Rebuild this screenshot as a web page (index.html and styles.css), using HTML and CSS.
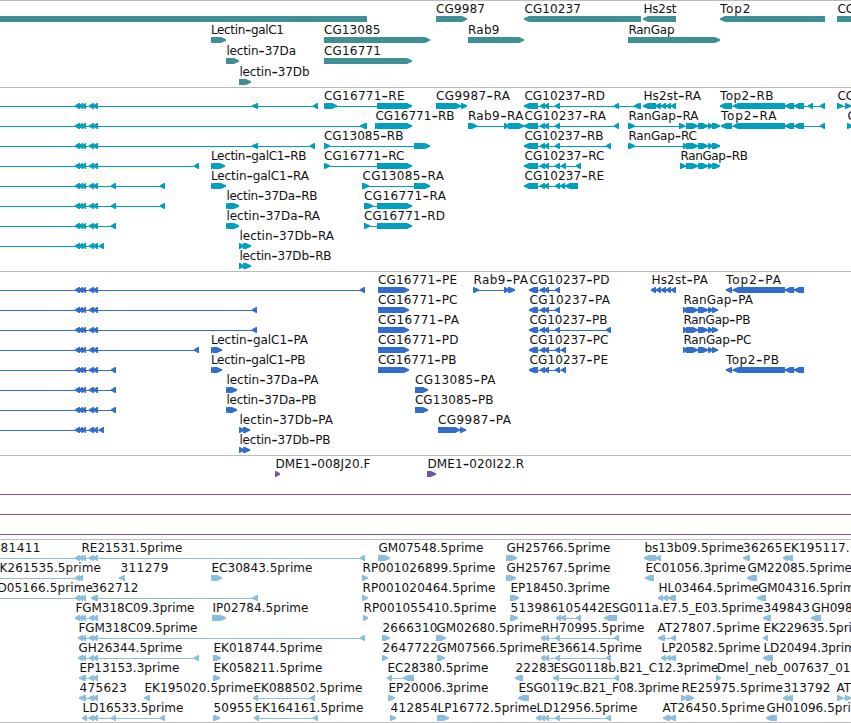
FILE: index.html
```html
<!DOCTYPE html>
<html lang="en">
<head>
    <meta charset="UTF-8">
    <meta name="viewport" content="width=device-width, initial-scale=1.0">
    <title>Genome Browser</title>
    <link rel="stylesheet" href="styles.css">
</head>
<body>
    <main class="browser">
        <section class="track track-genes"><svg id="genes"></svg></section>
        <section class="track track-transcripts"><svg id="transcripts"></svg></section>
        <section class="track track-proteins"><svg id="proteins"></svg></section>
        <section class="track track-bacs"><svg id="bacs"></svg></section>
        <section class="track track-ests"><svg id="ests"></svg></section>
    </main>
    <script src="tracks.js"></script>
</body>
</html>
```

FILE: styles.css
```css
body {
    margin: 0;
    background: #fff;
    overflow: hidden;
}

.browser {
    display: flex;
    flex-direction: column;
    border-bottom: 1px solid #bbb;
}

.track {
    border-top: 1px solid #bbb;
    height: 183px;
    overflow: hidden;
}

.track svg {
    display: block;
    width: 100%;
    height: 100%;
}

.track text {
    font-family: "DejaVu Sans", sans-serif;
    font-size: 12px;
    fill: #111;
}

.track .dash {
    font-size: 18px;
}

.track-genes {
    height: 86px;
    fill: #3f8f96;
}

.track-transcripts {
    fill: #009fbf;
}

.track-proteins {
    fill: #316dcd;
}

.track-bacs {
    height: 83px;
    fill: #7755a6;
}

.track-ests {
    height: 182px;
    fill: #89bedf;
}
```

FILE: tracks.js
```js
const SVG = 'http://www.w3.org/2000/svg';
const L = -1;
const R = 1;

// Exons shared by the long reverse strand transcripts
const C = [[75, 80], [79, 83], [82, 86], [89, 94], [93, 98]];
const C2 = [[78, 83], [82, 86], [89, 94], [93, 98]];
const C3 = [[79, 86], [89, 94], [93, 98]];
const OFF = [-20, -10];
const TOP = [[733, 785], [785, 794], [794, 804]];
const RAN = [[686, 698], [698, 708], [708, 713]];
const CG = [[540, 545], [544, 549], [555, 560]];

// [row, label, label start, label end, strand, exons]
const genes = [
    [0, '', 0, 0, L, [[-20, 367]]],
    [1, 'Lectin-galC1', 211.5, 283, R, [[211, 226]]],
    [2, 'lectin-37Da', 227, 295, R, [[226, 239]]],
    [3, 'lectin-37Db', 240, 308.5, R, [[239, 251]]],
    [1, 'CG13085', 324.5, 379.5, R, [[324, 430]]],
    [2, 'CG16771', 324.5, 380, R, [[324, 412]]],
    [0, 'CG9987', 436.5, 484, R, [[436, 467]]],
    [1, 'Rab9', 468.5, 498.5, R, [[468, 524]]],
    [0, 'CG10237', 525, 580, L, [[524, 641]]],
    [0, 'Hs2st', 644, 675.5, L, [[643, 676]]],
    [1, 'RanGap', 629, 673.5, R, [[628, 720]]],
    [0, 'Top2', 720.5, 749.5, L, [[720, 825]]],
    [0, 'CG', 838, 0, R, [[837, 870]]]
];

const transcripts = [
    [0, '', 0, 0, L, [OFF, ...C, [252, 258], [313, 318]]],
    [1, '', 0, 0, L, [OFF, ...C, [360, 367]]],
    [2, '', 0, 0, L, [OFF, ...C, [252, 258], [310, 315]]],
    [3, '', 0, 0, L, [OFF, ...C, [194, 199]]],
    [4, '', 0, 0, L, [OFF, ...C, [111, 116], [160, 165]]],
    [5, '', 0, 0, L, [OFF, ...C, [111, 116], [160, 165]]],
    [6, '', 0, 0, L, [OFF, ...C, [111, 116]]],
    [7, '', 0, 0, L, [OFF, ...C, [99, 104]]],
    [3, 'Lectin-galC1-RB', 211.5, 305.5, R, [[211, 215], [213, 225]]],
    [4, 'Lectin-galC1-RA', 211.5, 308, R, [[211, 215], [213, 226]]],
    [5, 'lectin-37Da-RB', 227, 316.5, R, [[226, 230], [228, 239]]],
    [6, 'lectin-37Da-RA', 227, 319, R, [[226, 230], [228, 239]]],
    [7, 'lectin-37Db-RA', 240, 333, R, [[239, 244], [243, 251]]],
    [8, 'lectin-37Db-RB', 240, 330.5, R, [[239, 244], [243, 251]]],
    [0, 'CG16771-RE', 324.5, 403.5, R, [[324, 328], [326, 337], [377, 412]]],
    [1, 'CG16771-RB', 376, 453.5, R, [[375, 379], [377, 412]]],
    [2, 'CG13085-RB', 324.5, 402.5, R, [[324, 330], [414, 430]]],
    [3, 'CG16771-RC', 324.5, 403.5, R, [[324, 330], [377, 412]]],
    [4, 'CG13085-RA', 363, 443, R, [[362, 369], [414, 430]]],
    [5, 'CG16771-RA', 364.5, 445, R, [[364, 373], [377, 412]]],
    [6, 'CG16771-RD', 364.5, 444, R, [[364, 370], [377, 412]]],
    [0, 'CG9987-RA', 436.5, 509, R, [[436, 461], [461, 467]]],
    [1, 'Rab9-RA', 468.5, 522.5, R, [[468, 477], [504, 509], [508, 524]]],
    [0, 'CG10237-RD', 525, 604, L, [[524, 538], ...CG, [614, 619], [634, 641]]],
    [1, 'CG10237-RA', 525, 605, L, [[524, 538], ...CG, [614, 619]]],
    [2, 'CG10237-RB', 525, 602.5, L, [[524, 538], ...CG, [606, 611]]],
    [3, 'CG10237-RC', 525, 603.5, L, [[524, 538], ...CG, [561, 566], [576, 581]]],
    [4, 'CG10237-RE', 525, 603, L, [[524, 538], ...CG, [560, 565], [565, 578]]],
    [0, 'Hs2st-RA', 644, 700, L, [[643, 656], [655, 661], [661, 666], [666, 671], [671, 676]]],
    [1, 'RanGap-RA', 629, 697.5, R, [[628, 635], [679, 685], ...RAN, [712, 720]]],
    [2, 'RanGap-RC', 629, 696, R, [[628, 635], [683, 687], ...RAN, [712, 720]]],
    [3, 'RanGap-RB', 681, 747, R, [[680, 686], ...RAN, [712, 720]]],
    [0, 'Top2-RB', 720.5, 772.5, L, [[720, 732], ...TOP, [808, 813], [820, 825]]],
    [1, 'Top2-RA', 721.5, 775.5, L, [[721, 732], ...TOP, [820, 825]]],
    [0, 'CG', 838, 0, R, [[837, 843], [845, 851]]],
    [1, 'CG', 848, 0, R, [[847, 853]]]
];

const PCG = [[529, 538], ...CG];
const PRAN = [[683, 687], ...RAN, [712, 718]];

const proteins = [
    [0, '', 0, 0, L, [OFF, ...C, [360, 365]]],
    [1, '', 0, 0, L, [OFF, ...C, [252, 257]]],
    [2, '', 0, 0, L, [OFF, ...C, [252, 257]]],
    [3, '', 0, 0, L, [OFF, ...C, [194, 199]]],
    [4, '', 0, 0, L, [OFF, ...C, [111, 116]]],
    [5, '', 0, 0, L, [OFF, ...C, [111, 116]]],
    [6, '', 0, 0, L, [OFF, ...C, [111, 116]]],
    [7, '', 0, 0, L, [OFF, ...C, [99, 104]]],
    [3, 'Lectin-galC1-PA', 211.5, 307, R, [[211, 215], [213, 222]]],
    [4, 'Lectin-galC1-PB', 211.5, 304.5, R, [[211, 215], [213, 222]]],
    [5, 'lectin-37Da-PA', 227, 317.5, R, [[226, 230], [228, 237]]],
    [6, 'lectin-37Da-PB', 227, 315.5, R, [[226, 230], [228, 237]]],
    [7, 'lectin-37Db-PA', 240, 332, R, [[239, 244], [243, 250]]],
    [8, 'lectin-37Db-PB', 240, 329.5, R, [[239, 244], [243, 250]]],
    [0, 'CG16771-PE', 378.5, 456, R, [[378, 409]]],
    [1, 'CG16771-PC', 378.5, 456.5, R, [[378, 409]]],
    [2, 'CG16771-PA', 378.5, 458, R, [[378, 409]]],
    [3, 'CG16771-PD', 378.5, 457.5, R, [[378, 409]]],
    [4, 'CG16771-PB', 378.5, 455.5, R, [[378, 409]]],
    [5, 'CG13085-PA', 415.5, 494.5, R, [[415, 428]]],
    [6, 'CG13085-PB', 415.5, 492.5, R, [[415, 428]]],
    [7, 'CG9987-PA', 438.5, 510, R, [[438, 460], [460, 466]]],
    [0, 'Rab9-PA', 474, 527, R, [[473, 479], [504, 509], [508, 515]]],
    [0, 'CG10237-PD', 530, 608.5, L, PCG],
    [1, 'CG10237-PA', 530, 609, L, PCG],
    [2, 'CG10237-PB', 530, 606.5, L, [...PCG, [606, 611]]],
    [3, 'CG10237-PC', 530, 607.5, L, [...PCG, [561, 566]]],
    [4, 'CG10237-PE', 530, 607, L, [...PCG, [561, 566]]],
    [0, 'Hs2st-PA', 652, 707, L, [[651, 656], [656, 661], [661, 666], [666, 671], [671, 676]]],
    [1, 'RanGap-PA', 684, 752, R, PRAN],
    [2, 'RanGap-PB', 684, 749.5, R, PRAN],
    [3, 'RanGap-PC', 684, 750.5, R, PRAN],
    [0, 'Top2-PA', 726.5, 780, L, [[726, 732], ...TOP]],
    [4, 'Top2-PB', 726.5, 778, L, [[726, 732], ...TOP]]
];

const bacs = [
    [0, 'DME1-008J20.F', 276, 369.5, R, [[275, 280]]],
    [0, 'DME1-020I22.R', 428, 523, R, [[427, 436]]],
    [1, '', 0, 0, R, [[-20, -10], [2000, 2010]]],
    [2, '', 0, 0, R, [[-20, -10], [2000, 2010]]],
    [3, '', 0, 0, R, [[-20, -10], [2000, 2010]]]
];

const ests = [
    [0, '81411', 1, 39.5, L, []],
    [0, 'RE21531.5prime', 82, 181.5, L, [OFF, ...C, [360, 365]]],
    [0, 'GM07548.5prime', 379, 482.5, R, [[378, 390]]],
    [0, 'GH25766.5prime', 507, 609.5, R, [[506, 510], [508, 517]]],
    [0, 'bs13b09.5prime', 645, 743, L, [[644, 656], [655, 661]]],
    [0, '36265', 743.5, 781.5, L, [[743, 750]]],
    [0, 'EK195117.', 784, 848.5, L, [[783, 788], [786, 793]]],

    [1, 'K261535.5prime', 0, 100, L, [OFF, [75, 80], [78, 83]]],
    [1, '311279', 121, 167.5, L, [[119, 125]]],
    [1, 'EC30843.5prime', 212, 311.5, R, [[211, 215], [213, 222]]],
    [1, 'RP001026899.5prime', 363, 494.5, R, [[362, 368]]],
    [1, 'GH25767.5prime', 507, 609.5, R, [[506, 510], [508, 516]]],
    [1, 'EC01056.3prime', 646, 745, L, [[645, 654]]],
    [1, 'GM22085.5prime', 748, 851, L, [[747, 757]]],

    [2, 'D05166.5prime', -2, 92, L, [OFF, [75, 80], [79, 83], [82, 86]]],
    [2, '362712', 92, 137.5, L, [[91, 98], [252, 258]]],
    [2, 'RP001020464.5prime', 363, 494.5, R, [[362, 368]]],
    [2, 'EP18450.3prime', 511, 609, R, [[510, 519]]],
    [2, 'HL03464.5prime', 659, 758, L, [[658, 663], [663, 668], [668, 676]]],
    [2, 'GM04316.5prime', 758.5, 861, L, [[757, 766]]],

    [3, 'FGM318C09.3prime', 76, 193.5, L, C],
    [3, 'IP02784.5prime', 213, 307.5, R, [[212, 226]]],
    [3, 'RP001055410.5prime', 364, 495.5, R, [[363, 368]]],
    [3, '513986', 511, 557, R, [[510, 518]]],
    [3, '105442', 558, 604, L, [[556, 561], [560, 566], [576, 581]]],
    [3, 'ESG011a.E7.5_E03.5prime', 605, 762.5, L, [[604, 617]]],
    [3, '349843', 764, 809, L, [[763, 771]]],
    [3, 'GH098', 812, 0, L, [[811, 821]]],

    [4, 'FGM318C09.5prime', 79, 196.5, L, [...C2, [360, 365]]],
    [4, '2666310', 383, 436.5, R, [[382, 390]]],
    [4, 'GM02680.5prime', 437, 541, R, [[436, 446]]],
    [4, 'RH70995.5prime', 542, 643.5, L, [[541, 545], [544, 549], [555, 560], [614, 619]]],
    [4, 'AT27807.5prime', 658, 759, L, [[658, 665], [671, 676]]],
    [4, 'EK229635.5prime', 764, 870, L, [[763, 768]]],

    [5, 'GH26344.5prime', 79, 181.5, L, [...C2, [194, 199]]],
    [5, 'EK018744.5prime', 214, 321.5, R, [[213, 221]]],
    [5, '2647722', 383, 437, R, [[382, 388]]],
    [5, 'GM07566.5prime', 438, 541, R, [[437, 445]]],
    [5, 'RE36614.5prime', 542, 641, L, [[541, 545], [544, 549], [555, 560], [606, 611]]],
    [5, 'LP20582.5prime', 662, 759.5, L, [[661, 666], [666, 671], [670, 676]]],
    [5, 'LD20494.3prime', 764, 862, L, [[763, 773]]],

    [6, 'EP13153.3prime', 80, 178.5, L, C3],
    [6, 'EK058211.5prime', 214, 321.5, R, [[213, 220]]],
    [6, 'EC28380.5prime', 388, 487.5, L, [[387, 392], [403, 414]]],
    [6, '22283', 516, 553.5, L, [[515, 523]]],
    [6, 'ESG0118b.B21_C12.3prime', 554, 717.5, L, [[553, 559], [614, 619]]],
    [6, 'Dmel_neb_007637_01', 717.5, 849.5, R, [[716, 721]]],

    [7, '475623', 80, 126, L, C3],
    [7, 'EK195020.5prime', 145, 252.5, L, [[144, 150]]],
    [7, 'EK088502.5prime', 254, 361.5, L, [[253, 258], [310, 315]]],
    [7, 'EP20006.3prime', 389, 487.5, R, [[388, 395]]],
    [7, 'ESG0119c.B21_F08.3prime', 519, 678.5, L, [[518, 529]]],
    [7, 'RE25975.5prime', 682, 782, R, [[681, 687], [686, 694]]],
    [7, '313792', 784, 829.5, L, [[783, 788], [786, 793]]],
    [7, 'AT', 837, 0, R, [[837, 843], [845, 851]]],

    [8, 'LD16533.5prime', 83, 182.5, L, [[82, 87], [89, 94], [93, 98], [111, 116], [160, 165]]],
    [8, '50955', 214, 251.5, R, [[213, 220]]],
    [8, 'EK164161.5prime', 255, 362.5, L, [[254, 259], [313, 318]]],
    [8, '412854', 391, 437, R, [[390, 396]]],
    [8, 'LP16772.5prime', 438, 536, R, [[437, 449]]],
    [8, 'LD12956.5prime', 537, 636.5, L, [[536, 541], [540, 545], [545, 549], [555, 560], [606, 611]]],
    [8, 'AT26450.5prime', 663, 764, L, [[663, 670], [669, 676]]],
    [8, 'GH01096.5prime', 767, 869, L, [[766, 777]]]
];

function add(parent, name, attrs) {
    const el = document.createElementNS(SVG, name);
    for (const key in attrs) {
        el.setAttribute(key, attrs[key]);
    }
    parent.appendChild(el);
    return el;
}

// Box with a blunt pointed end in the direction of the strand
function exonPoints(a, b, y, strand) {
    const head = Math.min(b - a - 1, 5);
    const tip = strand === L ? a : b;
    const neck = tip - strand * head;
    const tail = strand === L ? b : a;
    return `${tip},${y + 2.3} ${neck},${y} ${tail},${y} ${tail},${y + 6} ${neck},${y + 6} ${tip},${y + 3.7}`;
}

// Dashes are set wider than the font's own hyphen
function drawLabel(svg, label, start, end, y) {
    const text = add(svg, 'text', { x: start - 0.6, y: y });
    label.split('-').forEach((part, i) => {
        if (i > 0) {
            add(text, 'tspan', { class: 'dash', dy: 1.3 }).textContent = '-';
            add(text, 'tspan', { dy: -1.3 }).textContent = part;
        } else {
            add(text, 'tspan', {}).textContent = part;
        }
    });
    if (end) {
        text.setAttribute('textLength', end - start + 1.6);
    }
}

function drawTrack(id, features, rowHeight) {
    const svg = document.getElementById(id);
    for (const [row, label, start, end, strand, exons] of features) {
        const top = row * rowHeight;
        if (exons.length > 1) {
            const from = exons[0][0];
            const to = exons[exons.length - 1][1];
            add(svg, 'rect', { x: from, y: top + 18, width: to - from, height: 1 });
        }
        for (const [a, b] of exons) {
            add(svg, 'polygon', { points: exonPoints(a, b, top + 15, strand) });
        }
        if (label) {
            drawLabel(svg, label, start, end, top + 12);
        }
    }
}

drawTrack('genes', genes, 21);
drawTrack('transcripts', transcripts, 20);
drawTrack('proteins', proteins, 20);
drawTrack('bacs', bacs, 20);
drawTrack('ests', ests, 20);
```
